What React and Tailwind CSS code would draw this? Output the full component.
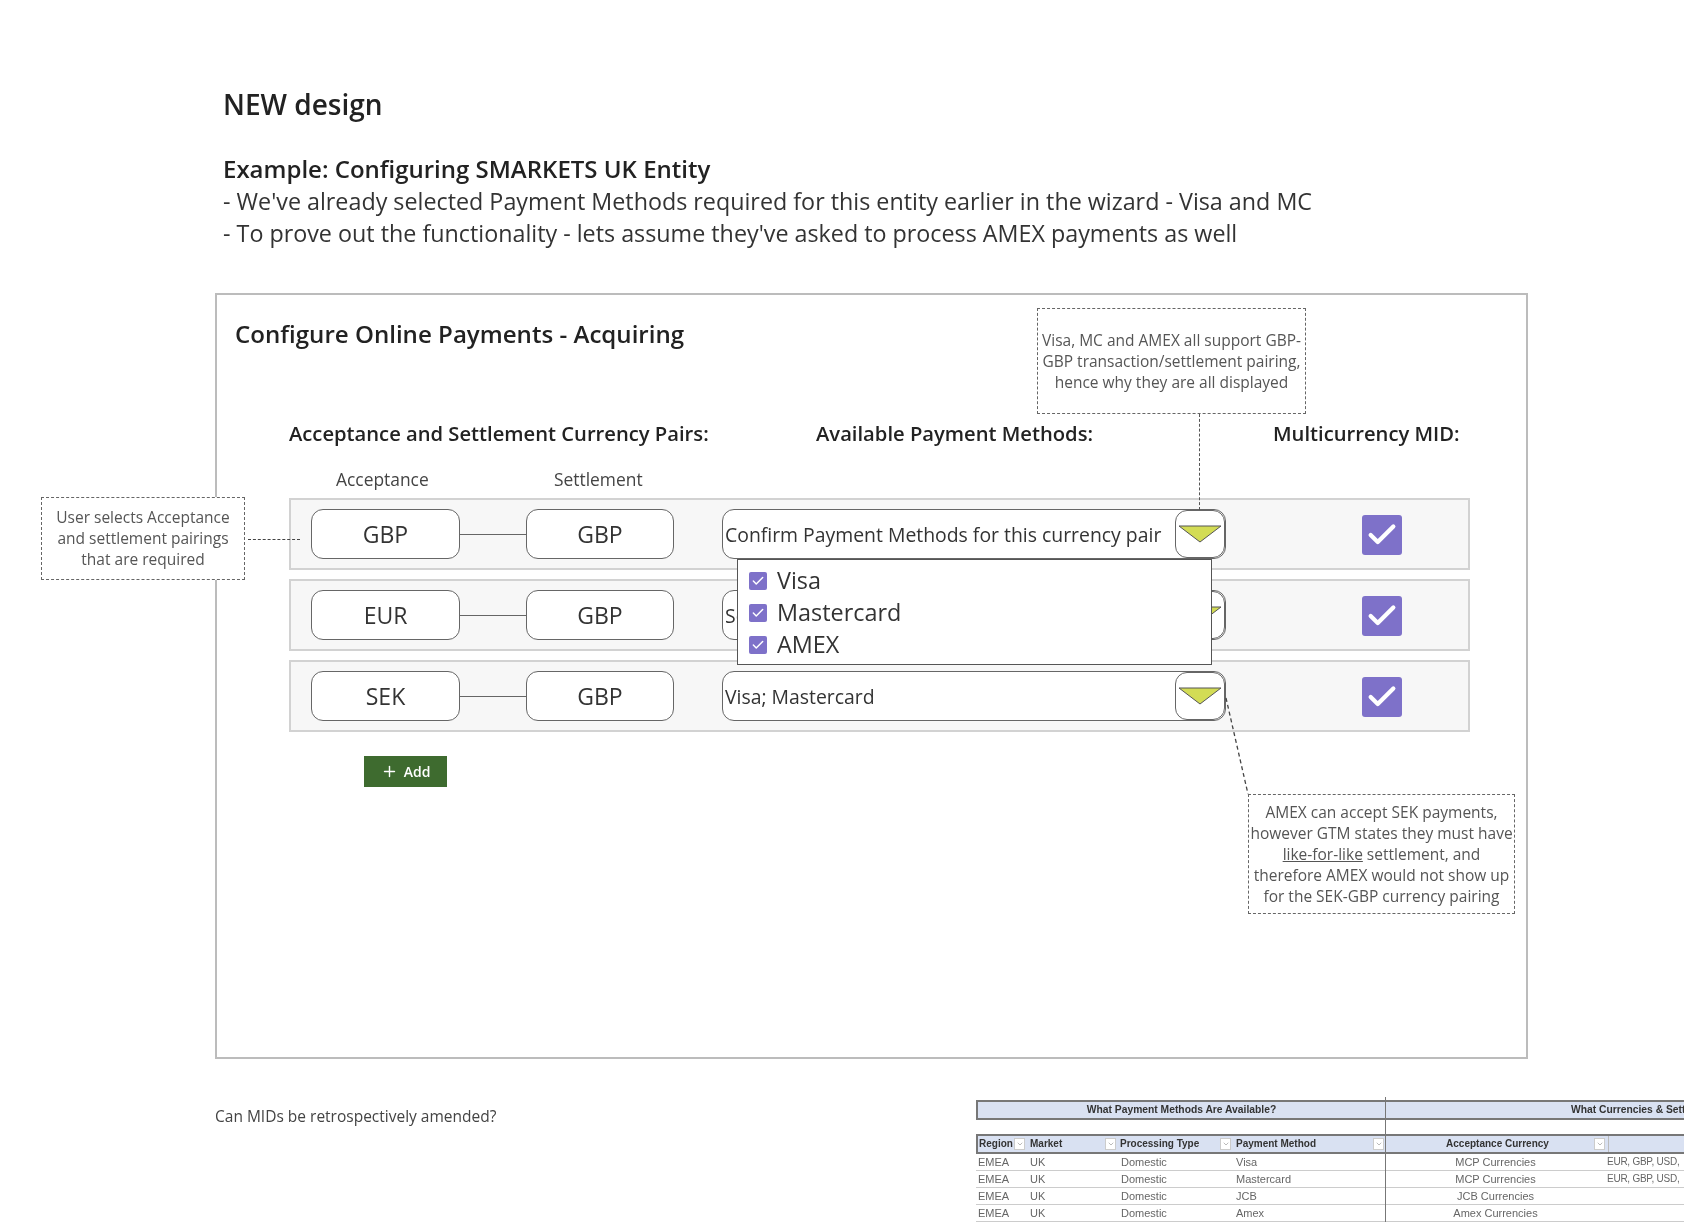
import React from "react";
import { Check, ChevronDown, Plus } from "lucide-react";

function Arrow() {
    return (
        <div className="w-[50px] h-full shrink-0 flex items-center justify-center bg-white rounded-[12px] border border-[#666]">
            <svg width="44" height="20" viewBox="0 0 44 20">
                <path d="M1 2 H43 L22 18 Z" fill="#d3dc55" stroke="#555" strokeWidth="1" />
            </svg>
        </div>
    );
}

function Pill({ children, w }) {
    return (
        <div className={`${w} h-[50px] shrink-0 flex items-center justify-center bg-white rounded-[12px] border border-[#666] text-[23px] text-[#333]`}>
            {children}
        </div>
    );
}

function Row({ code, text }) {
    return (
        <div className="flex items-center h-[72px] pl-[20px] bg-[#f7f7f7] border-2 border-[#d2d2d2]">
            <Pill w="w-[149px]">{code}</Pill>
            <div className="w-[66px] h-px bg-[#666] shrink-0"></div>
            <Pill w="w-[148px]">GBP</Pill>
            <div className="ml-[48px] w-[504px] h-[50px] shrink-0 flex items-center justify-between bg-white rounded-[12px] border border-[#666] pl-[2px] text-[19.4px] text-[#333]">
                <span className="whitespace-nowrap pt-[1px]">{text}</span>
                <Arrow />
            </div>
            <div className="ml-[136px] mt-[1px] w-[40px] h-[40px] flex items-center justify-center bg-[#7e71c9] rounded-[3px]">
                <Check size={34} color="white" strokeWidth={3} />
            </div>
        </div>
    );
}

function MenuItem({ label }) {
    return (
        <div className="flex items-center h-[32px]">
            <span className="w-[18px] h-[18px] flex items-center justify-center bg-[#7e71c9] rounded-[2px]">
                <Check size={14} color="white" strokeWidth={2.5} />
            </span>
            <span className="ml-[10px] text-[23.4px] text-[#333]">{label}</span>
        </div>
    );
}

function Callout({ className, children }) {
    return (
        <div className={`absolute flex items-center justify-center text-center bg-white border border-dashed border-[#666] text-[15.5px] leading-[21px] text-[#555] whitespace-nowrap ${className}`}>
            <div>{children}</div>
        </div>
    );
}

function HeadCell({ label, className }) {
    return (
        <div className={`relative ${className}`}>
            {label}
            <span className="absolute right-[3px] top-[2px] w-[11px] h-[12px] flex items-center justify-center bg-white border border-[#ccc]">
                <ChevronDown size={8} color="#999" />
            </span>
        </div>
    );
}

const tableRows = [
    ["EMEA", "UK", "Domestic", "Visa", "MCP Currencies", "EUR, GBP, USD,"],
    ["EMEA", "UK", "Domestic", "Mastercard", "MCP Currencies", "EUR, GBP, USD,"],
    ["EMEA", "UK", "Domestic", "JCB", "JCB Currencies", ""],
    ["EMEA", "UK", "Domestic", "Amex", "Amex Currencies", ""],
];

function SheetTable() {
    const cols = "grid grid-cols-[50px_91px_115px_153px_221px_78px]";
    return (
        <div className="relative w-[708px] shrink-0 blur-[0.5px] font-['Liberation_Sans',sans-serif] text-[11px] text-[#666]">
            <div className="flex h-[20px] bg-[#d9e1f2] border-y-2 border-l-2 border-[#777] font-bold text-[10.3px] text-[#333] leading-[16px]">
                <div className="w-[407px] shrink-0 text-center">What Payment Methods Are Available?</div>
                <div className="shrink-0 pl-[186px] whitespace-nowrap">What Currencies &amp; Settlement</div>
            </div>
            <div className={`${cols} mt-[14px] h-[20px] bg-[#d9e1f2] border-y-2 border-l-2 border-[#777] font-bold text-[10px] text-[#333] leading-[16px]`}>
                <HeadCell label="Region" className="pl-[1px]" />
                <HeadCell label="Market" className="pl-[2px]" />
                <HeadCell label="Processing Type" className="pl-[1px]" />
                <HeadCell label="Payment Method" className="pl-[2px]" />
                <HeadCell label="Acceptance Currency" className="text-center" />
                <div className="border-l border-[#bbb]"></div>
            </div>
            {tableRows.map((r, i) => (
                <div key={i} className={`${cols} h-[17px] leading-[16px] border-b border-[#ccc]`}>
                    <div className="pl-[2px]">{r[0]}</div>
                    <div className="pl-[4px]">{r[1]}</div>
                    <div className="pl-[4px]">{r[2]}</div>
                    <div className="pl-[4px]">{r[3]}</div>
                    <div className="text-center">{r[4]}</div>
                    <div className="pl-[1px] whitespace-nowrap text-[10px] tracking-tight">{r[5]}</div>
                </div>
            ))}
            <div className="absolute left-[409px] -top-[3px] bottom-0 w-px bg-[#777]"></div>
        </div>
    );
}

export default function App() {
    return (
        <div className="relative w-[1684px] h-[1228px] overflow-hidden bg-white blur-[0.4px] font-['Open_Sans',sans-serif] text-[#333]">
            <div className="pt-[86px] pl-[223px]">
                <h1 className="text-[28px] leading-[36px] font-semibold text-[#222]">NEW design</h1>
                <p className="mt-[31px] text-[24px] leading-[32px] font-semibold text-[#222]">Example: Configuring SMARKETS UK Entity</p>
                <p className="text-[23.3px] leading-[32px]">- We've already selected Payment Methods required for this entity earlier in the wizard - Visa and MC</p>
                <p className="text-[23.3px] leading-[32px]">- To prove out the functionality - lets assume they've asked to process AMEX payments as well</p>
            </div>

            <div className="mt-[44px] ml-[215px] w-[1313px] h-[766px] border-2 border-[#bcbcbc] pt-[23px]">
                <h2 className="pl-[18px] text-[24.1px] leading-[32px] font-semibold text-[#222]">Configure Online Payments - Acquiring</h2>
                <div className="mt-[69px] ml-[72px] flex text-[20.2px] leading-[28px] font-semibold text-[#222]">
                    <div className="w-[527px]">Acceptance and Settlement Currency Pairs:</div>
                    <div className="w-[457px]">Available Payment Methods:</div>
                    <div>Multicurrency MID:</div>
                </div>
                <div className="mt-[20px] ml-[72px] flex text-[17.4px] leading-[24px] text-[#444]">
                    <div className="w-[185px] pl-[47px]">Acceptance</div>
                    <div className="pl-[80px]">Settlement</div>
                </div>
                <div className="relative mt-[7px] ml-[72px] w-[1181px] flex flex-col gap-[9px]">
                    <Row code="GBP" text="Confirm Payment Methods for this currency pair" />
                    <Row code="EUR" text="Select Payment Methods" />
                    <Row code="SEK" text="Visa; Mastercard" />
                    <div className="absolute left-[448px] top-[61px] w-[475px] h-[106px] pl-[11px] pt-[5px] bg-white border border-[#555]">
                        <MenuItem label="Visa" />
                        <MenuItem label="Mastercard" />
                        <MenuItem label="AMEX" />
                    </div>
                </div>
                <button className="mt-[24px] ml-[147px] w-[83px] h-[31px] flex items-center justify-center gap-[6px] bg-[#3e6b2f] text-white text-[14px] font-semibold">
                    <Plus size={17} />
                    Add
                </button>
            </div>

            <div className="mt-[41px] ml-[215px] flex">
                <div className="w-[761px] shrink-0 pt-[5px] text-[15.5px] leading-[22px] text-[#444]">Can MIDs be retrospectively amended?</div>
                <SheetTable />
            </div>

            <Callout className="left-[41px] top-[497px] w-[204px] h-[83px]">
                User selects Acceptance<br />and settlement pairings<br />that are required
            </Callout>
            <Callout className="left-[1037px] top-[308px] w-[269px] h-[106px]">
                Visa, MC and AMEX all support GBP-<br />GBP transaction/settlement pairing,<br />hence why they are all displayed
            </Callout>
            <Callout className="left-[1248px] top-[794px] w-[267px] h-[120px]">
                AMEX can accept SEK payments,<br />however GTM states they must have<br /><span className="underline">like-for-like</span> settlement, and<br />therefore AMEX would not show up<br />for the SEK-GBP currency pairing
            </Callout>

            <div className="absolute left-[248px] top-[539px] w-[52px] border-t-[1.5px] border-dashed border-[#444]"></div>
            <div className="absolute left-[1199px] top-[414px] h-[96px] border-l border-dashed border-[#555]"></div>
            <svg className="absolute left-[1220px] top-[695px]" width="34" height="102">
                <line x1="6" y1="3" x2="28" y2="99" stroke="#444" strokeWidth="1.3" strokeDasharray="4 3" />
            </svg>
        </div>
    );
}
